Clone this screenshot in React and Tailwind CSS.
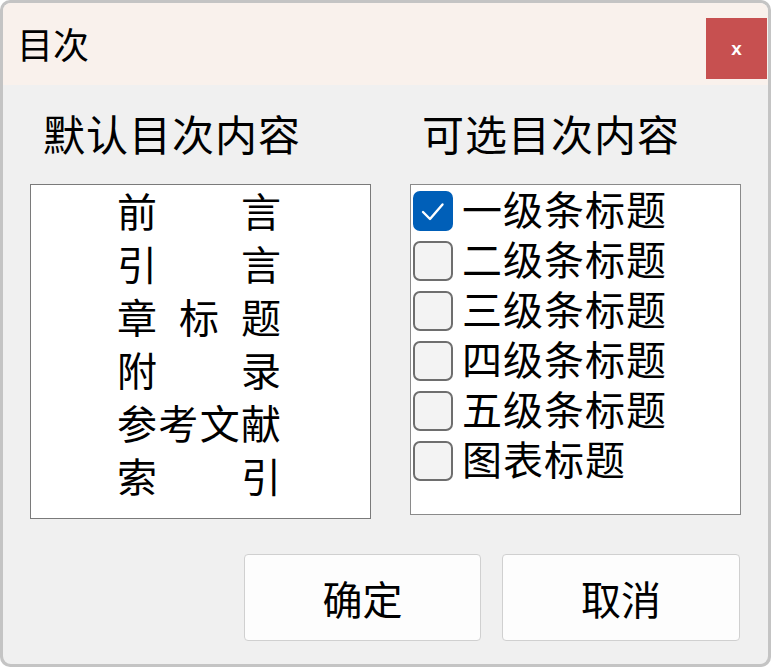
import React from 'react';

const FONT = { fontFamily: '"Noto Sans CJK SC", "Noto Sans", sans-serif' };

const defaults = [
  ['前', '言'],
  ['引', '言'],
  ['章', '标', '题'],
  ['附', '录'],
  ['参', '考', '文', '献'],
  ['索', '引'],
];

const options = [
  { label: '一级条标题', checked: true },
  { label: '二级条标题', checked: false },
  { label: '三级条标题', checked: false },
  { label: '四级条标题', checked: false },
  { label: '五级条标题', checked: false },
  { label: '图表标题', checked: false },
];

const Checkbox = ({ checked }) =>
  checked ? (
    <div className="w-[40px] h-[40px] rounded-[7px] bg-[#005fb8] shrink-0 mt-[5px]">
      <svg className="w-[40px] h-[40px]" viewBox="0 0 40 40" fill="none">
        <path d="M10 21L17 28L29.5 13.5" stroke="white" strokeWidth="2.4" strokeLinecap="round" strokeLinejoin="round" />
      </svg>
    </div>
  ) : (
    <div className="w-[40px] h-[40px] rounded-[7px] border-2 border-[#6e6e6e] bg-[#f3f3f3] shrink-0 mt-[5px]" />
  );

export default function App() {
  return (
    <div className="w-[771px] h-[667px] bg-[#c4c4c4] p-[3px] rounded-[10px]" style={FONT}>
      <div className="w-full h-full rounded-[8px] overflow-hidden bg-[#f0f0f0] flex flex-col text-black">
        {/* title bar */}
        <div className="h-[82px] bg-[#f9f1ec] flex justify-between pl-[14px] pr-[1px] shrink-0">
          <div className="text-[36px] leading-[36px] mt-[22px]">目次</div>
          <button className="w-[61px] h-[61px] mt-[15px] bg-[#c75050] text-white text-[19px] font-bold flex items-center justify-center leading-none" style={{ fontFamily: '"Liberation Sans", Arial, sans-serif' }}>
            x
          </button>
        </div>

        {/* body */}
        <div className="flex-1 flex flex-col px-[27px] pt-[27px]">
          <div className="flex gap-[39px]">
            <div className="w-[341px] flex flex-col">
              <div className="ml-[13px] text-[42px] leading-[42px] tracking-[1px]">默认目次内容</div>
              <div className="mt-[30px] h-[335px] bg-white border border-[#7a7a7a] pl-[86px] pt-[5px] flex flex-col gap-[13px]">
                {defaults.map((chars, i) => (
                  <div key={i} className="w-[164px] flex justify-between text-[40px] leading-[40px]">
                    {chars.map((c, j) => (
                      <span key={j}>{c}</span>
                    ))}
                  </div>
                ))}
              </div>
            </div>
            <div className="w-[331px] flex flex-col">
              <div className="ml-[12px] text-[42px] leading-[42px] tracking-[1px]">可选目次内容</div>
              <div className="mt-[30px] h-[331px] bg-white border border-[#8a8a8a] pl-[2px] pt-[1px]">
                {options.map((o) => (
                  <div key={o.label} className="h-[50px] flex items-start gap-[9px]">
                    <Checkbox checked={o.checked} />
                    <span className="text-[40px] leading-[44px] tracking-[1px]">{o.label}</span>
                  </div>
                ))}
              </div>
            </div>
          </div>

          <div className="flex justify-end gap-[21px] mt-[35px] mr-[1px]">
            <button className="w-[237px] h-[87px] bg-[#fdfdfd] border border-[#d0d0d0] rounded-[4px] text-[40px] leading-none">确定</button>
            <button className="w-[238px] h-[87px] bg-[#fdfdfd] border border-[#d0d0d0] rounded-[4px] text-[40px] leading-none">取消</button>
          </div>
        </div>
      </div>
    </div>
  );
}
